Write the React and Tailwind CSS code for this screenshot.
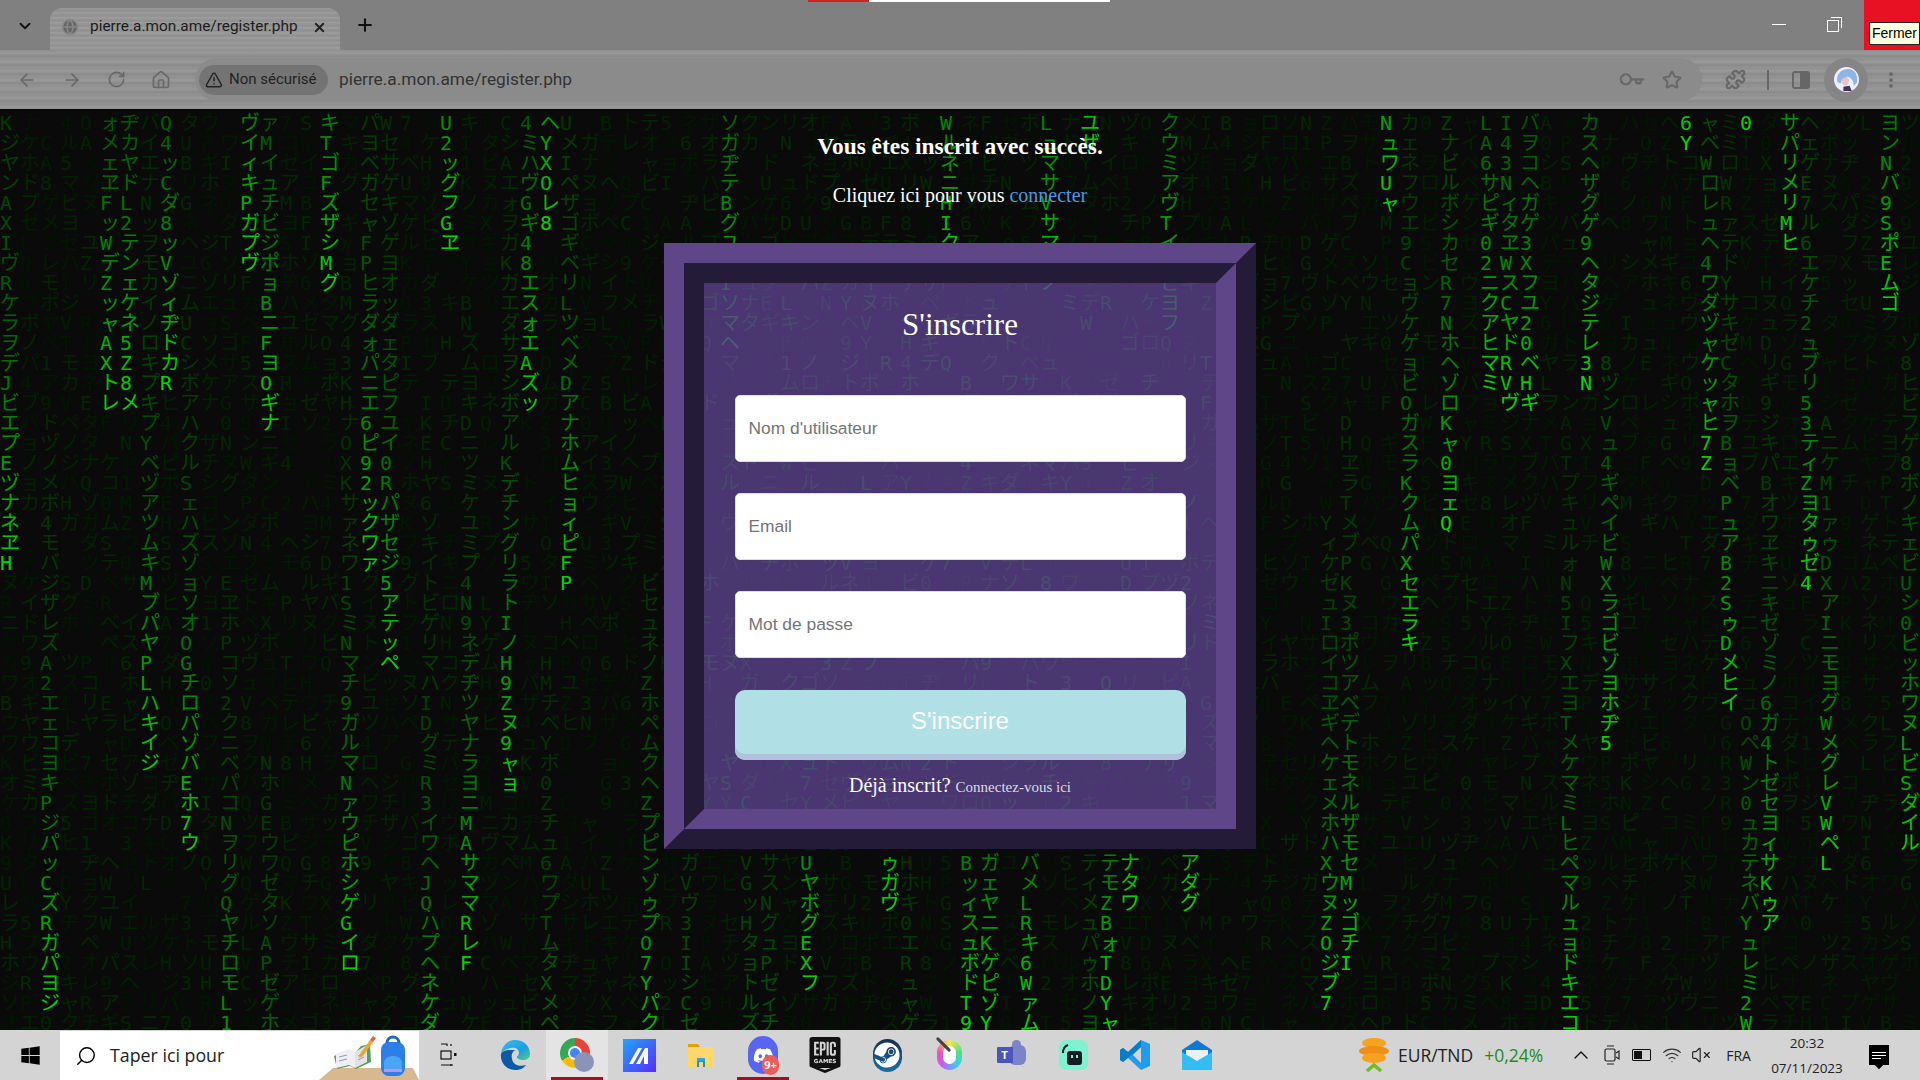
import React from "react";
import { ArrowLeft, ArrowRight, ChevronDown, ChevronUp, Globe, Home, Key, MoreVertical, Plus, Puzzle, RotateCw, Search, Star, TriangleAlert, VolumeX, Wifi, X } from "lucide-react";
import { FaDiscord, FaSteam, FaWindows } from "react-icons/fa";
import { SiEpicgames } from "react-icons/si";

const COLS = 96;
const ROWS = 46;
const KANA = "アイウエオカガキギクグケゲコゴサザシジスズセゼソゾタダチヂッツヅテデトドナニヌネノハバパヒビピフブプヘベペホボポマミムメモャヤュユョヨラリルレロワヲンヴ0123456789ABCDEFGHIKLMNOPQRSTUVWXYZ";

// [column, first row, glyphs, rows the head already fell past] : the last glyph is the brightest
const STREAMS = [
  [0, 0, "KジヤンAXIヴRケラヲデJビエプEヅナネヱH"],
  [2, 15, "ドヅノメボ4モバジザレズA2エェコヨキPジパッCズRガパヨジ"],
  [5, 0, "ォメェヱFッWデZッャAXトレ"],
  [6, 0, "ヂカヤドL2テンェケネ5Z8メ"],
  [7, 0, "バイエナNッヲモカイノロキプキプYベヅアツムキMブパヤPLハキイジ"],
  [8, 0, "Q4ッCダ8ッVゾィヂドカR"],
  [9, 9, "ムUCシボアハクルSェハズゾョソオOGチロパゾバEホ7ウ"],
  [11, 23, "EヱホPコソ2クニベパコNヲリグQヤチロモL1", 6],
  [12, 0, "ヴイィキPガプヴ"],
  [13, 0, "ァMイュチビジポョBニFヨOギナ"],
  [13, 32, "NホGEウワゼタソAPゼゲホ", 12],
  [16, 0, "キTゴFズザシMグ"],
  [17, 9, "Mグ43KHナOXKサァネワ1SミNマチ9ガルマNァウピホシゲGイロ"],
  [18, 0, "パヨベガセャFPヒラダォパニエ6ピ92ックワァ"],
  [19, 0, "Wセサゲキゾゲヨオッダェタピフユイ0Rパザセジ5アテッペ"],
  [21, 15, "KEHヤ6ゾキイトビゲリマハIDグミR3イワヘJQハプヘネケダ", 4],
  [22, 0, "U2ッグフGヱ"],
  [23, 9, "BNズムヨキDニツミケユミプ4N9ネデヂツヤナラヨニMAサママRレF"],
  [25, 0, "CシAエォヲガKガエダサヲシボアルKデチングリラトIノH9Zヌ9ャョ"],
  [26, 0, "4ミハヴGギ48エスォエAズッ"],
  [27, 0, "ヘYXOレ8"],
  [27, 27, "HMチベYボ0Zチュ6ワプTムタXメペ", 12],
  [28, 0, "UメIペザゴギベリLツベメDアナホムヒョィピFP"],
  [32, 23, "ビセュネノZホペムクヘZプピンゾゥプO7Yパク", 2],
  [34, 37, "ガVヴ3IIシCゼ", 14],
  [36, 0, "ソガヂテBグユラIソマヘ"],
  [37, 37, "VGッHタョトルズ", 14],
  [38, 37, "サスNグュPゼィチ", 14],
  [40, 37, "UヤボグEXフ"],
  [44, 37, "ゥガヴ"],
  [45, 37, "Hホキ0エRュャゲ", 18],
  [47, 0, "WルネニHIクフ"],
  [48, 37, "BッィスュボドT9"],
  [49, 37, "ガェヤニKゲピゾY"],
  [51, 37, "バメLRキ6Wァム"],
  [52, 0, "LュマサVサマォノ"],
  [54, 0, "ユザ"],
  [54, 37, "ティメュパゥホノヨ", 14],
  [55, 37, "テモZBォTDYャ"],
  [56, 37, "ナタワ"],
  [58, 0, "クウミアヴTイラビヨフ"],
  [59, 37, "アダグ"],
  [66, 20, "YィケゼュIロイコヱギヘケェメホハXウヌZOジブ7"],
  [67, 15, "DHヱラTメブPKヌ3ポツアベデトモネルザモセMッゴチI"],
  [69, 0, "NュワUャ"],
  [70, 0, "カェネフウエ9CョヴケゲョビOガスラKクムパXセエラキ"],
  [72, 0, "ZナビルボシカセR7NホヘゾロKャ0ヨェQ"],
  [74, 0, "LA6サピギ02ニクアヒマミ"],
  [75, 0, "I43NィタヱWスCヤドRVヴ"],
  [76, 0, "バヲコヘガゲ3Xフユ20ベHギ"],
  [78, 17, "TプキュルォN5IフXエヨTメケマミLヒペマルュョドキエコ"],
  [79, 0, "カスヘザグゲ9ヘタジテレ3N"],
  [80, 12, "8ヅンVュ4ギペイビWXラゴビゾヨホヂ5"],
  [84, 0, "6Y"],
  [85, 0, "ャベWロレュヘ4ワダヅャケッャヒ7Z"],
  [86, 0, "ミミロWRァテドYサキゼCタホヲBョベPュアB2SゥDメヒイ"],
  [87, 0, "0"],
  [87, 30, "OペWン0ュカテネバYュレミ2W", 3],
  [88, 8, "HヌュDリギ9ジキパBオワヱキニキゼゾミノ6ガ4トゼセヨィサKゥア"],
  [89, 0, "サパリメリMヒ"],
  [90, 0, "ヘェゲE7ル6エケチ2ュブリ53ティZヨタゥゼ4"],
  [91, 15, "AニケM1ァゥDXアIニモヨグWメグレVWペL"],
  [94, 0, "ヨンNバ9SポEムゴ"],
  [95, 11, "ゾ8ヒビフゲ8ボノキェビUシ0ビッホワヌLビSダイル"],
];

// small fixed generator so the rain is the same on every load
const rand = (a, b) => {
  const n = Math.sin(a * 127.1 + b * 311.7) * 43758.5453;
  return n - Math.floor(n);
};

const buildRain = () => {
  const cells = [];
  for (let c = 0; c < COLS; c++) {
    const col = [];
    for (let r = 0; r < ROWS; r++) {
      const g = KANA[Math.floor(rand(c, r) * KANA.length)];
      const underCard = c >= 35 && c <= 60 && r >= 7 && r <= 35;
      let v = 20 + Math.floor(rand(r, c + 9) * 22);
      if (underCard && rand(c + 3, r + 5) > 0.45) v = 70 + Math.floor(rand(c, r + 2) * 60);
      col.push({ g: rand(c + 7, r + 1) > 0.93 ? " " : g, v });
    }
    cells.push(col);
  }
  STREAMS.forEach(([c, start, text, past = 0]) => {
    const glyphs = [...text];
    const head = start + glyphs.length - 1 + past;
    glyphs.forEach((g, i) => {
      const r = start + i;
      if (r < ROWS) cells[c][r] = { g, v: Math.round(190 * Math.exp(-(head - r) / 13) + 24) };
    });
  });
  return cells;
};

const rain = buildRain();

const MatrixRain = () => (
  <div className="absolute inset-0 flex overflow-hidden pt-[4px] font-['DejaVu_Sans_Mono','Noto_Sans_CJK_JP',monospace] text-[20px] leading-[20px]">
    {rain.map((col, c) => (
      <div key={c} className="flex w-[20px] shrink-0 flex-col">
        {col.map((cell, r) => (
          <span key={r} className="h-[20px] whitespace-pre" style={{ color: `rgb(0,${cell.v},0)` }}>
            {cell.g}
          </span>
        ))}
      </div>
    ))}
  </div>
);

const Field = ({ placeholder }) => (
  <input
    placeholder={placeholder}
    className="h-[67px] w-[451px] rounded-[5px] border border-[#ddd] bg-white px-[13px] font-['Liberation_Sans',sans-serif] text-[17.4px] outline-none placeholder:text-[#757575]"
  />
);

const BrowserChrome = () => (
  <>
    <div className="relative flex h-[50px] items-end bg-[#808080]">
      <ChevronDown size={18} strokeWidth={2.5} className="mb-[15px] ml-[16px] text-[#111]" />
      <div className="ml-[16px] flex h-[42px] w-[290px] items-center rounded-t-[12px] bg-[repeating-linear-gradient(180deg,#9a9a9a_0px,#8f8f8f_3px,#a0a0a0_5px)] pb-[4px] pl-[11px] pr-[13px] font-['Roboto',sans-serif] text-[15.4px] text-[#1c1c1c]">
        <Globe size={18} fill="#666" className="shrink-0 text-[#888]" />
        <span className="ml-[11px] flex-1 whitespace-nowrap">pierre.a.mon.ame/register.php</span>
        <X size={15} strokeWidth={3} className="text-[#222]" />
      </div>
      <Plus size={20} strokeWidth={2.5} className="mb-[15px] ml-[15px] text-[#111]" />
      <div className="flex-1" />
      <div className="mb-[25px] mr-[41px] h-[1px] w-[14px] bg-white" />
      <div className="relative mb-[18px] mr-[25px] h-[12px] w-[12px] border-[1.5px] border-white">
        <div className="absolute -right-[4px] -top-[4px] h-[11px] w-[11px] border-r-[1.5px] border-t-[1.5px] border-white" />
      </div>
      <div className="h-[50px] w-[56px] bg-[#e81123]" />
      <div className="absolute right-0 top-0 h-[2px] w-[1112px] bg-[linear-gradient(90deg,#c22_0,#c22_61px,#fff_61px,#fff_302px,transparent_302px)]" />
      <div className="absolute right-0 top-[22px] border border-[#222] bg-[#ffffe1] px-[2px] font-['Liberation_Sans',sans-serif] text-[14px] leading-[21px] text-black">Fermer</div>
    </div>
    <div className="flex h-[59px] items-center bg-[repeating-linear-gradient(180deg,#8e8e8e_0px,#9a9a9a_3px,#8a8a8a_6px,#949494_9px)] text-[#686868]">
      <ArrowLeft size={20} className="ml-[17px]" />
      <ArrowRight size={20} className="ml-[25px]" />
      <RotateCw size={19} className="ml-[25px]" />
      <Home size={20} className="ml-[25px]" />
      <div className="ml-[24px] flex h-[43px] w-[1507px] items-center rounded-full bg-[#8b8b8b] pl-[4px] pr-[20px]">
        <div className="flex h-[30px] w-[129px] items-center rounded-full bg-[#747474] pl-[6px] font-['Roboto',sans-serif] text-[15px] text-[#222]">
          <TriangleAlert size={18} className="shrink-0 text-[#222]" />
          <span className="ml-[6px] whitespace-nowrap">Non sécurisé</span>
        </div>
        <span className="ml-[11px] font-['Roboto',sans-serif] text-[17.3px] text-[#333]">pierre.a.mon.ame/register.php</span>
        <div className="flex-1" />
        <Key size={22} strokeWidth={2.5} className="rotate-45" />
        <Star size={20} strokeWidth={2.5} className="ml-[20px]" />
      </div>
      <Puzzle size={21} strokeWidth={2.5} className="ml-[23px]" />
      <div className="ml-[21px] h-[20px] w-[2px] bg-[#666]" />
      <div className="ml-[23px] flex h-[18px] w-[18px] justify-end rounded-[3px] border-[2px] border-[#666]">
        <div className="h-full w-[8px] bg-[#666]" />
      </div>
      <div className="ml-[14px] flex h-[44px] w-[44px] items-center justify-center rounded-full bg-[#858585]">
        <svg viewBox="0 0 24 24" className="h-[25px] w-[25px]">
          <circle cx="12" cy="12" r="12" fill="#eef" />
          <path d="M3 14C2 5 9 1 15 2c6 1 8 7 7 13l-3 3c0-5-3-8-6-9-3 2-6 4-7 7z" fill="#8fb4e6" />
          <path d="M7 13c2-3 5-4 7-2 1 3 0 6-3 7-2-1-4-2-4-5z" fill="#e8c4c8" />
          <path d="M9 19l6-1 2 5H9z" fill="#443355" />
        </svg>
      </div>
      <MoreVertical size={20} strokeWidth={2.5} className="ml-[13px]" />
    </div>
  </>
);

const Slot = ({ children, active, highlight }) => (
  <div className={`relative flex h-[50px] w-[62px] shrink-0 items-center justify-center ${highlight ? "bg-[#e4e4e4]" : ""}`}>
    {children}
    {active && <div className="absolute bottom-0 left-[5px] right-[5px] h-[3px] bg-[#a30f22]" />}
  </div>
);

const Taskbar = () => (
  <div className="relative flex h-[50px] items-center bg-[#d4d4d4] font-['Open_Sans',sans-serif]">
    <div className="flex w-[60px] justify-center">
      <FaWindows size={21} className="text-black" />
    </div>
    <div className="relative flex h-[49px] w-[359px] items-center self-end bg-white pl-[15px] text-[17.8px] text-[#222]">
      <Search size={22} strokeWidth={1.6} className="-scale-x-100 text-black" />
      <span className="ml-[13px]">Taper ici pour</span>
      <svg viewBox="0 0 100 50" className="absolute bottom-0 right-0 h-[50px] w-[100px]">
        <path d="M14 38h80l6 12H0z" fill="#d8b88e" />
        <path d="M15 26l15-6 6 3 6-7 9-2 1 18-15 7-6-3-13 3z" fill="#5aa05c" />
        <path d="M17 24l13-5 6 3v16l-6-3-13 3z" fill="#eeeef4" />
        <path d="M36 22l12-7v17l-12 6z" fill="#e2e2ea" />
        <path d="M20 27l8-2M20 31l8-2M39 26l6-3M39 30l6-3" stroke="#9a9aa8" strokeWidth="1" />
        <path d="M41 24l10-14 3 2-10 14-4 2z" fill="#eda52c" />
        <path d="M51 10l3-4 3 2-3 4z" fill="#e85b4a" />
        <rect x="62" y="12" width="24" height="34" rx="8" fill="#2d7fe8" />
        <path d="M68 13c0-8 12-8 12 0" fill="none" stroke="#2364c4" strokeWidth="3" />
        <path d="M65 32c2-8 16-8 18 0v8H65z" fill="#4aa5f5" />
        <rect x="65" y="39" width="18" height="3" fill="#c58cf0" />
      </svg>
    </div>
    <div className="flex w-[60px] justify-center">
      <svg viewBox="0 0 20 24" className="h-[24px] w-[20px]" fill="none" stroke="#111" strokeWidth="1.2">
        <path d="M2 1h6v2M12 1v2M2 22h12M12 21v2" />
        <rect x="2" y="8" width="10" height="8" />
        <rect x="15" y="10" width="2.5" height="3" fill="#111" stroke="none" />
      </svg>
    </div>
    <div className="ml-[5px] flex">
      <Slot>
        <svg viewBox="0 0 32 32" className="h-[32px] w-[32px]">
          <defs>
            <linearGradient id="edge" x1="0" y1="0" x2="1" y2="1">
              <stop offset="0" stopColor="#35c1f1" />
              <stop offset="0.6" stopColor="#1b9de2" />
              <stop offset="1" stopColor="#52d17c" />
            </linearGradient>
          </defs>
          <path d="M2 15C3 6 9 1 16 1c9 0 15 6 15 14 0 4-3 6-7 6-3 0-6-1-6-3 0-1 2-2 2-4 0-4-4-6-8-5-5 1-9 3-10 6z" fill="url(#edge)" />
          <path d="M2 15c-1 9 6 16 14 16 5 0 9-2 11-5-7 2-13 0-14-6-1-4 0-7 3-9-7 0-12 0-14 4z" fill="#0c59a4" />
        </svg>
      </Slot>
      <Slot active highlight>
        <div className="relative h-[34px] w-[34px]">
          <div className="h-[30px] w-[30px] rounded-full bg-[conic-gradient(#ea4335_0deg,#ea4335_120deg,#fbbc05_120deg,#fbbc05_240deg,#34a853_240deg,#34a853_360deg)] p-[8px]">
            <div className="h-full w-full rounded-full border-2 border-white bg-[#4285f4]" />
          </div>
          <div className="absolute bottom-0 right-0 h-[20px] w-[20px] rounded-full bg-[#8a93b8]" />
        </div>
      </Slot>
      <Slot>
        <svg viewBox="0 0 33 33" className="h-[33px] w-[33px]">
          <defs>
            <linearGradient id="mama" x1="0" y1="0" x2="1" y2="1">
              <stop offset="0" stopColor="#1fa5ff" />
              <stop offset="1" stopColor="#5a2bff" />
            </linearGradient>
          </defs>
          <rect width="33" height="33" fill="url(#mama)" />
          <path d="M6 25L15 9h4L10 25zM13 25l9-16h3v16h-4v-8l-4 8z" fill="#fff" />
        </svg>
      </Slot>
      <Slot>
        <svg viewBox="0 0 28 28" className="h-[30px] w-[28px]">
          <path d="M1 3h10l2 3H1z" fill="#e2a100" />
          <path d="M1 6h26v20H1z" fill="#ffd76a" />
          <path d="M10 19h8v7h-2v-5h-4v5h-2z" fill="#1a8fd0" />
          <rect x="10" y="17" width="8" height="3" fill="#2aa5e8" />
        </svg>
      </Slot>
      <Slot active>
        <div className="relative flex h-[38px] w-[30px] items-center justify-center rounded-full bg-[#5865f2]">
          <FaDiscord size={21} className="text-white" />
          <div className="absolute -bottom-[1px] -right-[1px] flex h-[20px] w-[17px] items-center justify-center rounded-full bg-[#ee5b5b] text-[11px] font-bold text-white">9+</div>
        </div>
      </Slot>
      <Slot>
        <SiEpicgames size={36} className="text-[#111]" />
      </Slot>
      <Slot>
        <div className="flex h-[33px] w-[29px] items-center justify-center rounded-full bg-[linear-gradient(180deg,#152f55,#1a6fa5)]">
          <FaSteam size={26} className="text-white" />
        </div>
      </Slot>
      <Slot>
        <div className="relative h-[30px] w-[25px] rounded-full bg-[conic-gradient(#f6e84a,#4be08a,#42c8f5,#c060f0,#f050c0,#f6e84a)] p-[6px]">
          <div className="h-full w-full rounded-full bg-white" />
          <div className="absolute -left-[3px] top-[3px] h-[3px] w-[19px] rotate-45 rounded-full bg-[#444]" />
        </div>
      </Slot>
      <Slot>
        <div className="relative h-[30px] w-[29px]">
          <div className="absolute right-0 top-[5px] h-[20px] w-[17px] rounded-[6px] bg-[#7b83c9]" />
          <div className="absolute right-[5px] top-0 h-[9px] w-[9px] rounded-full bg-[#7b83c9]" />
          <div className="absolute left-0 top-[7px] flex h-[16px] w-[16px] items-center justify-center rounded-[1px] bg-[#4b53bc] font-['Liberation_Sans',sans-serif] text-[11px] font-bold text-white">T</div>
        </div>
      </Slot>
      <Slot>
        <svg viewBox="0 0 29 30" className="h-[30px] w-[29px]">
          <rect width="29" height="30" rx="7" fill="#7ff3cf" />
          <rect x="8" y="11" width="15" height="14" rx="3" fill="#101f22" />
          <path d="M4 13c0-4 2-7 5-8" fill="none" stroke="#101f22" strokeWidth="2" />
          <rect x="12" y="15" width="2" height="3" fill="#7ff3cf" />
          <rect x="17" y="15" width="2" height="3" fill="#7ff3cf" />
        </svg>
      </Slot>
      <Slot>
        <svg viewBox="0 0 30 32" className="h-[32px] w-[30px]">
          <path d="M21 1l9 4v22l-9 4-13-12-5 4-3-2v-10l3-2 5 4z" fill="#1f9cf0" />
          <path d="M21 8l-8 8 8 8z" fill="#d4d4d4" />
          <path d="M21 1L8 13 3 9 0 11v10l3 2L21 8z" fill="#0a7cc4" />
        </svg>
      </Slot>
      <Slot>
        <svg viewBox="0 0 30 32" className="h-[32px] w-[30px]">
          <path d="M0 11L15 1l15 10v20H0z" fill="#0f78d4" />
          <path d="M4 11h22v8l-11 6-11-6z" fill="#eaf3fb" />
          <path d="M0 13l15 9 15-9v18H0z" fill="#33bdf2" />
        </svg>
      </Slot>
    </div>
    <svg viewBox="0 0 32 34" className="ml-[130px] h-[34px] w-[32px] shrink-0">
      <ellipse cx="16" cy="5" rx="12" ry="5" fill="#f7a11c" />
      <ellipse cx="16" cy="13" rx="15" ry="5" fill="#ef9016" />
      <ellipse cx="16" cy="20" rx="12" ry="5" fill="#f7a11c" />
      <path d="M9 33l7-6 7 6" fill="none" stroke="#6cc01f" strokeWidth="3.5" />
    </svg>
    <span className="ml-[8px] whitespace-nowrap text-[17.5px] text-[#222]">EUR/TND</span>
    <span className="ml-[11px] whitespace-nowrap text-[17.5px] text-[#1f8a1f]">+0,24%</span>
    <ChevronUp size={24} strokeWidth={1.4} className="ml-[26px] shrink-0 text-[#111]" />
    <svg viewBox="0 0 16 22" className="ml-[11px] h-[22px] w-[16px] shrink-0" fill="none" stroke="#222" strokeWidth="1.2">
      <path d="M3 2h7M3 20h7" />
      <rect x="1" y="5" width="10" height="12" rx="1.5" />
      <path d="M12 9l3-2v8l-3-2" />
    </svg>
    <div className="ml-[12px] flex h-[12px] w-[19px] shrink-0 rounded-[1px] border-[1.5px] border-[#111] p-[1px]">
      <div className="w-[8px] bg-[#111]" />
    </div>
    <Wifi size={20} strokeWidth={1.4} className="ml-[11px] shrink-0 text-[#333]" />
    <VolumeX size={20} strokeWidth={1.4} className="ml-[9px] shrink-0 text-[#222]" />
    <span className="ml-[15px] text-[14px] text-[#222]">FRA</span>
    <div className="ml-[14px] flex w-[84px] shrink-0 flex-col items-center pt-[1px] text-[13.5px] leading-[25px] text-[#222]">
      <span>20:32</span>
      <span>07/11/2023</span>
    </div>
    <div className="relative ml-[20px] flex h-[20px] w-[20px] shrink-0 flex-col justify-center gap-[2px] bg-black px-[3px]">
      <div className="h-[1px] bg-white" />
      <div className="h-[1px] bg-white" />
      <div className="h-[1px] w-[9px] bg-white" />
      <div className="absolute -bottom-[3px] left-[7px] h-[6px] w-[6px] rotate-45 bg-black" />
    </div>
  </div>
);

const App = () => {
  return (
    <div className="flex h-screen w-[1920px] flex-col overflow-hidden bg-[#0a0a0a]">
      <BrowserChrome />

      <main className="relative flex flex-1 flex-col items-center overflow-hidden">
        <MatrixRain />

        <div className="relative flex flex-col items-center font-['Liberation_Serif',serif] text-white">
          <p className="mt-[24px] text-[23.4px] font-bold leading-[26px]">Vous êtes inscrit avec succès.</p>
          <p className="mt-[24px] text-[20px] leading-[24px]">
            Cliquez ici pour vous <a className="text-[#4f97e0]">connecter</a>
          </p>

          <div className="mt-[36px] h-[606px] w-[592px] border-[20px] border-b-[#241b38] border-l-[#5e4689] border-r-[#241b38] border-t-[#5e4689]">
            <div className="h-full w-full border-[20px] border-b-[#5e4689] border-l-[#241b38] border-r-[#5e4689] border-t-[#241b38] bg-[#5a4189]/80">
              <form className="flex flex-col items-center pt-[24px]">
                <h2 className="text-[31px] leading-[36px]">S'inscrire</h2>
                <div className="mt-[52px] flex flex-col gap-[31px]">
                  <Field placeholder="Nom d'utilisateur" />
                  <Field placeholder="Email" />
                  <Field placeholder="Mot de passe" />
                </div>
                <button
                  type="button"
                  className="mt-[32px] h-[70px] w-[451px] rounded-[10px] bg-[#b0e0e6] pb-[8px] font-['Liberation_Sans',sans-serif] text-[24px] text-white shadow-[inset_0_-6px_0_#afc2d9]"
                >
                  S'inscrire
                </button>
                <p className="mt-[13px] text-[20px] leading-[24px]">
                  Déjà inscrit? <a className="text-[15px] text-[#ddd]">Connectez-vous ici</a>
                </p>
              </form>
            </div>
          </div>
        </div>
      </main>

      <Taskbar />
    </div>
  );
};

export default App;
